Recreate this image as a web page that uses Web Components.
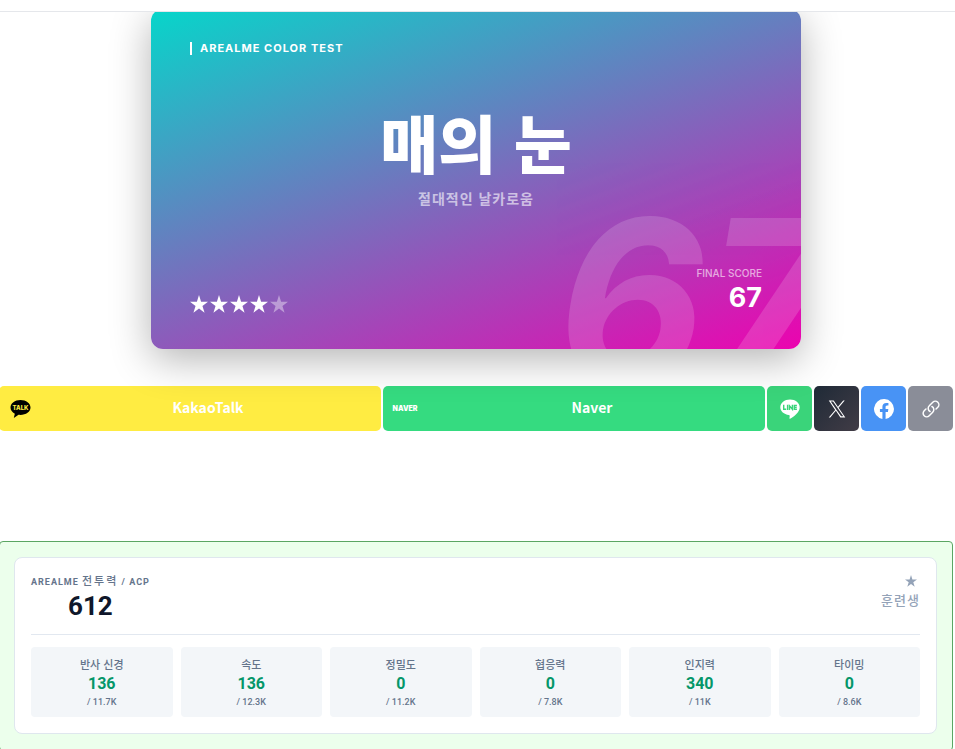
<!DOCTYPE html>
<html lang="ko">

<head>
    <meta charset="UTF-8">
    <meta name="viewport" content="width=device-width, initial-scale=1.0">
    <title>Arealme Color Test</title>
    <style>
        body {
            margin: 0;
            background: #fff;
            overflow: hidden;
            font-family: Inter, "Noto Sans CJK KR", sans-serif;
        }
    </style>
</head>

<body>
    <color-result></color-result>

    <script>
        function define(name, html, setup) {
            const template = document.createElement("template");
            template.innerHTML = html;

            customElements.define(name, class extends HTMLElement {
                constructor() {
                    super();
                    this.attachShadow({ mode: "open" });
                    this.shadowRoot.appendChild(template.content.cloneNode(true));
                }

                connectedCallback() {
                    if (setup) setup(this, this.shadowRoot);
                }
            });
        }

        define("star-icon", `<style>
            :host { display: inline-block; width: 18px; height: 18px; }
            svg { display: block; width: 100%; height: 100%; fill: currentColor; }
        </style>
        <svg viewBox="0 0 24 24" aria-hidden="true"><path d="M12 0l2.8 9.1H24l-7.4 5.5 2.8 9L12 18l-7.4 5.6 2.8-9L0 9.100h9.200z"/></svg>`);

        define("star-rating", `<style>
            :host { display: flex; gap: 2px; }
            .off { opacity: .4; }
        </style>`, (host, root) => {
            const value = Number(host.getAttribute("value"));
            for (let i = 0; i < 5; i++) {
                const star = document.createElement("star-icon");
                if (i >= value) star.className = "off";
                root.appendChild(star);
            }
        });

        define("score-card", `<style>
            :host {
                display: flex;
                flex-direction: column;
                justify-content: space-between;
                box-sizing: border-box;
                position: relative;
                width: 100%;
                max-width: 650px;
                min-height: 340px;
                margin: 0 auto;
                padding: 33px 39px;
                border-radius: 12px;
                color: #fff;
                background: linear-gradient(160deg, #06d6ca, #ec04b0);
                box-shadow: 0 10px 40px rgba(0, 0, 0, .3);
            }
            .clip {
                position: absolute;
                inset: 0;
                overflow: hidden;
                border-radius: inherit;
            }
            .ghost {
                position: absolute;
                right: -37px;
                bottom: -66px;
                font: italic 700 228px/1 Inter, sans-serif;
                opacity: .15;
            }
            .tag {
                align-self: flex-start;
                padding-left: 8px;
                border-left: 2px solid #fff;
                font-size: 11px;
                line-height: 13px;
                font-weight: 700;
                letter-spacing: 1px;
            }
            .middle { padding-bottom: 10px; text-align: center; }
            h1 {
                margin: 0;
                font: 900 63px/76px "Noto Sans CJK KR", sans-serif;
            }
            p {
                margin: 9px 0 0;
                font: 700 14px/20px "Noto Sans CJK KR", sans-serif;
                letter-spacing: 1px;
                opacity: .6;
            }
            .foot {
                position: relative;
                display: flex;
                align-items: flex-end;
                justify-content: space-between;
            }
            star-rating { margin-bottom: 3px; }
            .score { text-align: right; }
            .score small {
                display: block;
                font-size: 10px;
                line-height: 14px;
                font-weight: 500;
                opacity: .6;
            }
            .score b { display: block; font-size: 27px; line-height: 36px; }
        </style>
        <div class="clip"><span class="ghost" aria-hidden="true">67</span></div>
        <div class="tag">AREALME COLOR TEST</div>
        <div class="middle">
            <h1><slot name="title"></slot></h1>
            <p><slot name="subtitle"></slot></p>
        </div>
        <div class="foot">
            <star-rating value="4"></star-rating>
            <div class="score"><small>FINAL SCORE</small><b><slot name="score"></slot></b></div>
        </div>`);

        define("share-button", `<style>
            :host { display: block; width: 45px; height: 45px; }
            :host([wide]) { flex: 1; }
            button {
                display: flex;
                align-items: center;
                justify-content: center;
                width: 100%;
                height: 100%;
                margin: 0;
                padding: 0;
                border: 0;
                border-radius: 5px;
                color: #fff;
                background: var(--share-color);
                font: 700 14px/20px "Noto Sans CJK KR", sans-serif;
                cursor: pointer;
            }
            :host([wide]) button { padding-left: 8px; }
            .icon { display: flex; justify-content: center; flex: none; width: 28px; }
            .label { display: none; }
            :host([wide]) .label { display: block; flex: 1; padding-bottom: 4px; }
        </style>
        <button><span class="icon"><slot name="icon"></slot></span><span class="label"><slot></slot></span></button>`,
        (host, root) => {
            const label = host.getAttribute("label");
            if (label) root.querySelector("button").setAttribute("aria-label", label);
        });

        define("share-bar", `<style>
            :host { display: flex; gap: 2px; }
            svg { display: block; }
            .kakao { --share-color: #ffec42; }
            .naver { --share-color: #35db80; }
            .line { --share-color: #3ad47a; }
            .x { --share-color: linear-gradient(135deg, #1f2a37, #413c46); }
            .facebook { --share-color: #4893f5; }
            .copy { --share-color: #8a8d98; }
            .word { font: 900 7px/10px Inter, sans-serif; }
        </style>
        <share-button wide class="kakao">
            <svg slot="icon" width="24" height="20" viewBox="0 0 24 20">
                <path d="M11.500 1C5.800 1 1.500 4.300 1.500 8.500c0 2.600 1.700 4.900 4.300 6.200L4.800 19l4.700-3.200c6.700.7 12-2.700 12-7.300C21.500 4.300 17.200 1 11.500 1z"/>
                <text x="11.500" y="11" text-anchor="middle" font-family="Inter" font-size="6" font-weight="800" fill="#ffec42">TALK</text>
            </svg>
            KakaoTalk
        </share-button>
        <share-button wide class="naver">
            <span slot="icon" class="word">NAVER</span>
            Naver
        </share-button>
        <share-button class="line" label="LINE">
            <svg slot="icon" width="22" height="22" viewBox="0 0 22 22">
                <path fill="#fff" d="M11 1.500c-5.500 0-9.700 3.400-9.700 7.800 0 4 3.700 7.200 8.600 7.700 1.100.2.900 1.200.5 3.300 0 .4.300.6.700.4 3.300-1.700 9.600-6.200 9.600-11.400 0-4.400-4.200-7.800-9.700-7.800z"/>
                <path fill="none" stroke="#3ad47a" stroke-width="1.400" d="M4.700 6.800v4.500h2.500M8.600 6.800v5.100M10.500 11.900v-4l2.900 3.400v-4.500M17.900 7.500h-2.600v3.800h2.600M15.300 9.400h2.400"/>
            </svg>
        </share-button>
        <share-button class="x" label="X">
            <svg slot="icon" width="18" height="18" viewBox="0 0 24 24">
                <path fill="#fff" d="M14.100 10.200 22.300.6h-2L13.200 8.900 7.600.6H1l8.600 12.600L1 23.200h2l7.500-8.800 6 8.800h6.600zM11.500 13.300l-.9-1.200L3.700 2.100h3l5.600 8 .9 1.300 7.200 10.400h-3z"/>
            </svg>
        </share-button>
        <share-button class="facebook" label="Facebook">
            <svg slot="icon" width="20" height="20" viewBox="0 0 24 24">
                <path fill="#fff" d="M24 12a12 12 0 1 0-13.900 11.900v-8.400H7.100V12h3V9.400c0-3 1.800-4.700 4.600-4.700 1.300 0 2.600.2 2.600.2v3h-1.500c-1.500 0-1.900.9-1.900 1.900V12h3.300l-.5 3.500h-2.800v8.400A12 12 0 0 0 24 12z"/>
            </svg>
        </share-button>
        <share-button class="copy" label="링크 복사">
            <svg slot="icon" width="18" height="18" viewBox="0 0 24 24" fill="none" stroke="#fff" stroke-width="2" stroke-linecap="round" stroke-linejoin="round">
                <path d="M13.200 8.700a4.700 4.700 0 0 1 1.100 7.600l-4.700 4.700a4.700 4.700 0 0 1-6.700-6.700l2.400-2.300M18.700 12l2.400-2.300a4.700 4.700 0 0 0-6.700-6.700L9.700 7.700a4.700 4.700 0 0 0 1.100 7.600"/>
            </svg>
        </share-button>`);

        define("stat-tile", `<style>
            :host {
                display: block;
                padding: 9px 8px;
                border-radius: 4px;
                background: #f3f6f9;
                color: #64748b;
                text-align: center;
            }
            .name {
                font: 500 11px/16px "Noto Sans CJK KR", sans-serif;
            }
            .value {
                color: #059669;
                font: 700 16px/24px Roboto, sans-serif;
            }
            .max { font: 500 9px/12px Roboto, sans-serif; }
        </style>
        <div class="name"><slot></slot></div>
        <div class="value"></div>
        <div class="max"></div>`, (host, root) => {
            root.querySelector(".value").textContent = host.getAttribute("value");
            root.querySelector(".max").textContent = "/ " + host.getAttribute("max");
        });

        define("power-panel", `<style>
            :host {
                display: block;
                padding: 15px 15px 16px 14px;
                border: 1px solid #5ba663;
                border-radius: 4px;
                background: #ecffec;
            }
            .card {
                padding: 16px;
                border: 1px solid #dfe7ee;
                border-radius: 8px;
                background: #fff;
            }
            .head {
                display: flex;
                justify-content: space-between;
                padding-bottom: 12px;
                border-bottom: 1px solid #e2e8f0;
            }
            .power { text-align: center; color: #64748b; }
            .caption {
                font: 700 9px/16px Roboto, "Noto Sans CJK KR", sans-serif;
                letter-spacing: 1px;
            }
            .caption span { font-weight: 500; font-size: 11px; letter-spacing: 2px; }
            .total {
                color: #0f172a;
                font: 700 26px/32px Roboto, sans-serif;
            }
            .rank { text-align: right; color: #94a3b8; }
            .rank star-icon { display: block; width: 12px; height: 12px; margin: 1px 3px 3px auto; }
            .rank div {
                font: 500 13px/20px "Noto Sans CJK KR", sans-serif;
                letter-spacing: 1px;
            }
            .stats {
                display: grid;
                grid-template-columns: repeat(6, 1fr);
                gap: 8px;
                padding-top: 12px;
            }
        </style>
        <div class="card">
            <div class="head">
                <div class="power">
                    <div class="caption">AREALME <span>전투력</span> / ACP</div>
                    <div class="total">612</div>
                </div>
                <div class="rank"><star-icon></star-icon><div>훈련생</div></div>
            </div>
            <div class="stats">
                <stat-tile value="136" max="11.7K">반사 신경</stat-tile>
                <stat-tile value="136" max="12.3K">속도</stat-tile>
                <stat-tile value="0" max="11.2K">정밀도</stat-tile>
                <stat-tile value="0" max="7.8K">협응력</stat-tile>
                <stat-tile value="340" max="11K">인지력</stat-tile>
                <stat-tile value="0" max="8.6K">타이밍</stat-tile>
            </div>
        </div>`);

        define("color-result", `<style>
            :host { display: block; }
            header {
                position: relative;
                z-index: 1;
                height: 11px;
                border-bottom: 1px solid #e5e7eb;
                background: #fff;
            }
            main { display: block; margin: -3px 2px 0 -1px; }
            score-card { margin-bottom: 37px; }
            share-bar { margin-bottom: 110px; }
        </style>
        <header></header>
        <main>
            <score-card>
                <span slot="title">매의 눈</span>
                <span slot="subtitle">절대적인 날카로움</span>
                <span slot="score">67</span>
            </score-card>
            <share-bar></share-bar>
            <power-panel></power-panel>
        </main>`);
    </script>
</body>

</html>
